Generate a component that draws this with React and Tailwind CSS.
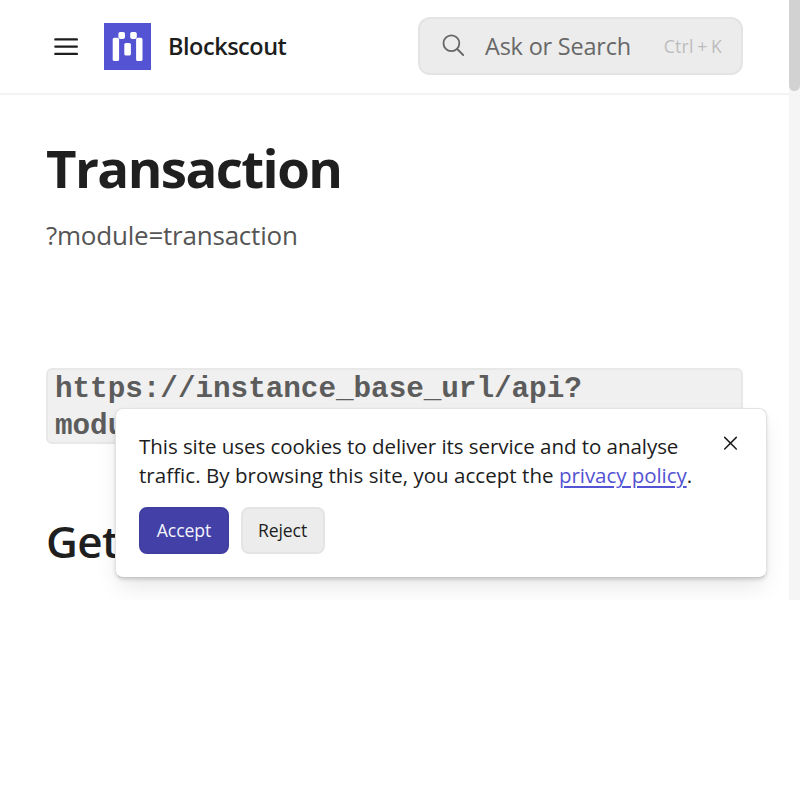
function Menu() {
  return (
    <svg className="h-7 w-7 shrink-0" viewBox="0 0 28 28" fill="none" stroke="#1d1d1d" strokeWidth="2.4" strokeLinecap="round">
      <path d="M3.4 6.4h21.4M3.4 13.6h21.4M3.4 20.9h21.4" />
    </svg>
  );
}

function Logo() {
  return (
    <svg className="ml-6 h-[47px] w-[47px] shrink-0" viewBox="0 0 47 47">
      <path fill="#5353d3" d="M0 0h47v47H0z" />
      <g fill="#fff">
        <rect x="8.7" y="14.8" width="6.4" height="23.2" rx="1.6" />
        <rect x="14.4" y="8.9" width="6.6" height="7" rx="1.8" />
        <rect x="20.3" y="20" width="6.6" height="12.5" rx="1.6" />
        <rect x="26.2" y="8.9" width="6.6" height="7" rx="1.8" />
        <rect x="32.1" y="14.8" width="6.4" height="23.2" rx="1.6" />
      </g>
    </svg>
  );
}

function Header() {
  return (
    <header className="flex h-[95px] shrink-0 items-start border-b-2 border-[#f3f3f3] pr-[46px] pl-[52px]">
      <div className="flex h-[93px] items-center">
        <Menu />
        <Logo />
        <span className="ml-[17px] text-[23.47px] font-semibold tracking-[-0.46px] whitespace-nowrap text-[#1d1d1d]">Blockscout</span>
      </div>
      <div className="mt-[17px] ml-auto flex h-[58px] w-[325px] items-center rounded-xl border-2 border-[#e4e4e4] bg-[#ececec] pr-[19px] pl-[22px]">
        <svg className="-mt-px h-[24px] w-[24px]" viewBox="0 0 24 24" fill="none" stroke="#666" strokeWidth="1.8" strokeLinecap="round">
          <circle cx="9.4" cy="9.2" r="7.9" />
          <path d="m15.2 15 6 6" />
        </svg>
        <span className="ml-[19px] pt-[2px] text-[23.47px] tracking-[-0.2px] whitespace-nowrap text-[#686868]">Ask or Search</span>
        <span className="ml-auto text-[17.6px] tracking-[0.3px] whitespace-nowrap text-[#bcbcbc] [word-spacing:-1.5px]">Ctrl + K</span>
      </div>
    </header>
  );
}

function CookieBanner() {
  return (
    <div className="absolute top-[408px] left-[115px] h-[170px] w-[652px] rounded-lg border border-[#e2e2e2] border-b-[#c8c8c8] bg-white pt-[23px] pl-[23px] shadow-[0_12px_24px_-4px_rgba(0,0,0,0.1),0_2px_4px_-1px_rgba(0,0,0,0.2)]">
      <p className="text-[20.53px] leading-[29.33px] whitespace-nowrap text-[#1d1d1d]">
        <span className="tracking-[-0.055px]">This site uses cookies to deliver its service and to analyse</span>
        <br />
        <span className="tracking-[0.035px]">traffic. By browsing this site, you accept the </span>
        <a className="tracking-[-0.06px] text-[#5353d3] underline decoration-2 underline-offset-[3px]">privacy policy</a>.
      </p>
      <div className="mt-4 flex gap-3">
        <button className="h-[47px] w-[90px] rounded-lg border-2 border-[#403fa0] bg-[#4341a7] text-[17.6px] tracking-[-0.05px] text-[#f4f4fc]">Accept</button>
        <button className="h-[47px] w-[84px] rounded-lg border-2 border-[#e4e4e4] bg-[#ececec] pr-px text-[17.6px] tracking-[-0.1px] text-[#1d1d1d]">Reject</button>
      </div>
      <svg className="absolute top-[26px] right-[27px] h-4 w-4" viewBox="0 0 16 16" fill="none" stroke="#1d1d1d" strokeWidth="1.5" strokeLinecap="round">
        <path d="m1.7 2.4 11.6 11.6M13.3 2.4 1.7 14" />
      </svg>
    </div>
  );
}

export default function App() {
  return (
    <div className="h-[793px] w-[800px] bg-white font-['Open_Sans',sans-serif]">
      <div className="relative flex h-[600px] overflow-hidden">
        <div className="flex w-[789px] flex-col">
          <Header />
          <main className="px-[46px] pt-[40px]">
            <h1 className="text-[52.8px] leading-[66px] font-bold tracking-[-1.59px] text-[#1f1f1f]">Transaction</h1>
            <p className="mt-[12px] text-[26px] leading-[44px] tracking-[-0.22px] text-[#555]">?module=transaction</p>
            <div className="mt-[111px] h-[76px] rounded-md border-2 border-[#e8e8e8] bg-[#f0f0f0] pt-px pl-[7px] font-['Liberation_Mono',monospace] text-[29.33px] leading-[37px] font-bold tracking-[-0.04px] text-[#5c5c5c]">
              https://instance_base_url/api?
              <br />
              modu
            </div>
            <h2 className="mt-[67px] text-[44px] leading-[60px] font-semibold tracking-[-0.7px] text-[#1f1f1f]">Get</h2>
          </main>
        </div>
        <div className="w-[11px] bg-[#f5f5f5]">
          <div className="-mt-2 h-[99px] rounded-md bg-[#d2d2d2]" />
        </div>
        <CookieBanner />
      </div>
    </div>
  );
}
